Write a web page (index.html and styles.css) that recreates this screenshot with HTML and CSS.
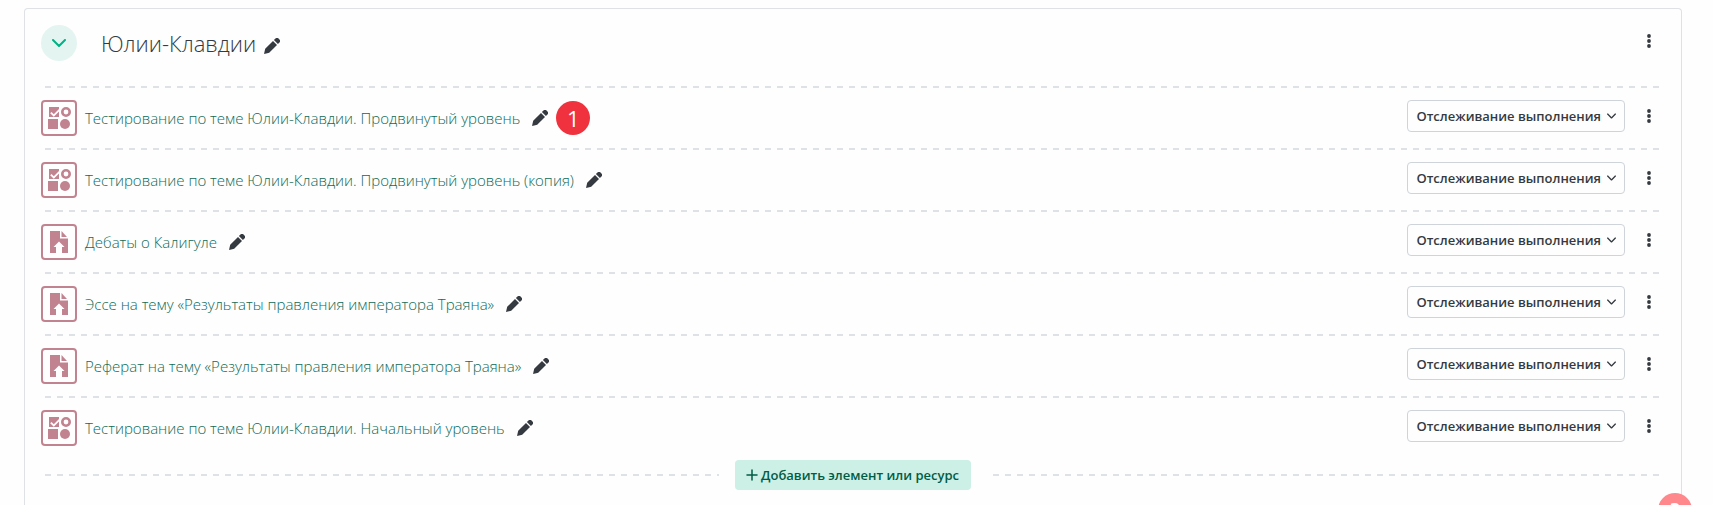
FILE: index.html
```
<!DOCTYPE html>
<html lang="ru">
<head>
    <meta charset="UTF-8">
    <meta name="viewport" content="width=device-width, initial-scale=1">
    <title>Юлии-Клавдии</title>
    <link rel="stylesheet" href="styles.css">
</head>
<body>
    <svg class="sprite" aria-hidden="true">
        <symbol id="pencil" viewBox="0 0 16 16">
            <path d="M0 16l1.2-5.2L9 3l4 4-7.8 7.8zM9.900 2.100l1.300-1.300a2.500 2.500 0 0 1 3.600 0l.4.400a2.500 2.500 0 0 1 0 3.600L13.900 6.100z"/>
        </symbol>
        <symbol id="dots" viewBox="0 0 4 14">
            <circle cx="2" cy="2" r="1.900"/><circle cx="2" cy="7" r="1.900"/><circle cx="2" cy="12" r="1.900"/>
        </symbol>
        <symbol id="chevron" viewBox="0 0 14 8">
            <path d="M1 1l6 6 6-6" fill="none" stroke="currentColor" stroke-linecap="round" stroke-linejoin="round"/>
        </symbol>
        <symbol id="quiz" viewBox="0 0 24 24">
            <path d="M2 1h10v2L6.800 8.200 4.500 6 3.200 7.300l3.600 3.500L12 5.600V11H2z"/>
            <circle cx="19" cy="6" r="3.700" fill="none" stroke="currentColor" stroke-width="2.600"/>
            <path d="M1 13h10v10H1z"/>
            <circle cx="18" cy="18" r="5"/>
        </symbol>
        <symbol id="assign" viewBox="0 0 24 24">
            <path d="M3 1h10v7.500h8V23h-6v-6h2.500L12 11.500 6.500 17H9v6H3z"/>
            <path d="M14.500 1v6H20z"/>
        </symbol>
    </svg>

    <main class="section">
        <header class="section-header">
            <button class="toggle" aria-label="Свернуть"><svg class="toggle-icon"><use href="#chevron"/></svg></button>
            <h3 class="section-title">Юлии-Клавдии</h3>
            <button class="edit edit-title" aria-label="Изменить"><svg><use href="#pencil"/></svg></button>
            <button class="menu" aria-label="Меню"><svg><use href="#dots"/></svg></button>
        </header>

        <ul class="activities">
            <li class="activity">
                <span class="activity-icon"><svg><use href="#quiz"/></svg></span>
                <a class="activity-name" href="#">Тестирование по теме Юлии-Клавдии. Продвинутый уровень</a>
                <button class="edit" aria-label="Изменить"><svg><use href="#pencil"/></svg></button>
                <span class="step">1</span>
                <div class="actions">
                    <button class="completion">Отслеживание выполнения <svg><use href="#chevron"/></svg></button>
                    <button class="menu" aria-label="Меню"><svg><use href="#dots"/></svg></button>
                </div>
            </li>
            <li class="activity">
                <span class="activity-icon"><svg><use href="#quiz"/></svg></span>
                <a class="activity-name" href="#">Тестирование по теме Юлии-Клавдии. Продвинутый уровень (копия)</a>
                <button class="edit" aria-label="Изменить"><svg><use href="#pencil"/></svg></button>
                <div class="actions">
                    <button class="completion">Отслеживание выполнения <svg><use href="#chevron"/></svg></button>
                    <button class="menu" aria-label="Меню"><svg><use href="#dots"/></svg></button>
                </div>
            </li>
            <li class="activity">
                <span class="activity-icon"><svg><use href="#assign"/></svg></span>
                <a class="activity-name" href="#">Дебаты о Калигуле</a>
                <button class="edit" aria-label="Изменить"><svg><use href="#pencil"/></svg></button>
                <div class="actions">
                    <button class="completion">Отслеживание выполнения <svg><use href="#chevron"/></svg></button>
                    <button class="menu" aria-label="Меню"><svg><use href="#dots"/></svg></button>
                </div>
            </li>
            <li class="activity">
                <span class="activity-icon"><svg><use href="#assign"/></svg></span>
                <a class="activity-name" href="#">Эссе на тему «Результаты правления императора Траяна»</a>
                <button class="edit" aria-label="Изменить"><svg><use href="#pencil"/></svg></button>
                <div class="actions">
                    <button class="completion">Отслеживание выполнения <svg><use href="#chevron"/></svg></button>
                    <button class="menu" aria-label="Меню"><svg><use href="#dots"/></svg></button>
                </div>
            </li>
            <li class="activity">
                <span class="activity-icon"><svg><use href="#assign"/></svg></span>
                <a class="activity-name" href="#">Реферат на тему «Результаты правления императора Траяна»</a>
                <button class="edit" aria-label="Изменить"><svg><use href="#pencil"/></svg></button>
                <div class="actions">
                    <button class="completion">Отслеживание выполнения <svg><use href="#chevron"/></svg></button>
                    <button class="menu" aria-label="Меню"><svg><use href="#dots"/></svg></button>
                </div>
            </li>
            <li class="activity">
                <span class="activity-icon"><svg><use href="#quiz"/></svg></span>
                <a class="activity-name" href="#">Тестирование по теме Юлии-Клавдии. Начальный уровень</a>
                <button class="edit" aria-label="Изменить"><svg><use href="#pencil"/></svg></button>
                <div class="actions">
                    <button class="completion">Отслеживание выполнения <svg><use href="#chevron"/></svg></button>
                    <button class="menu" aria-label="Меню"><svg><use href="#dots"/></svg></button>
                </div>
            </li>
        </ul>

        <div class="add-row">
            <div class="add-wrap">
                <button class="add-btn">
                    <svg viewBox="0 0 12 12"><path d="M6 1v10M1 6h10" fill="none" stroke="currentColor" stroke-width="1.500" stroke-linecap="round"/></svg>
                    Добавить элемент или ресурс
                </button>
            </div>
        </div>
    </main>

    <button class="help">?</button>
</body>
</html>
```
FILE: styles.css
```
* { box-sizing: border-box; }
body {
    margin: 0;
    padding: 8px 31px 0 24px;
    background: #fefefe;
    color: #343a40;
    font-family: 'Open Sans', sans-serif;
    font-size: 15px;
}
button {
    font-family: inherit;
    color: inherit;
    background: none;
    border: none;
    padding: 0;
    cursor: pointer;
}
svg {
    fill: currentColor;
    display: block;
}
.sprite {
    display: none;
}
.section {
    min-height: calc(100vh - 8px);
    border: 1px solid #dee2e6;
    border-bottom: none;
    border-radius: 4px 4px 0 0;
    padding: 16px 16px 0;
}
.section-header {
    display: flex;
    align-items: center;
    padding-bottom: 25px;
}
.toggle {
    width: 36px;
    height: 36px;
    border-radius: 50%;
    background: #e4f5f1;
    color: #00b386;
    display: flex;
    align-items: center;
    justify-content: center;
}
.toggle-icon {
    width: 14px;
    height: 8px;
    stroke-width: 2;
}
.section-title {
    margin: 0 0 0 24px;
    font-size: 22px;
    line-height: 36px;
    font-weight: 300;
}
.edit svg {
    width: 16px;
    height: 16px;
}
.edit {
    margin-left: 12px;
}
.edit-title {
    margin-left: 8px;
    padding-top: 6px;
}
.menu {
    width: 32px;
    height: 32px;
    display: flex;
    align-items: center;
    justify-content: center;
}
.menu svg {
    width: 4px;
    height: 14px;
}
.section-header .menu {
    margin-left: auto;
    align-self: flex-start;
}
.activities {
    list-style: none;
    margin: 0;
    padding: 0;
}
/* пунктир между элементами */
.activity::before,
.add-row::before {
    content: "";
    position: absolute;
    left: 4px;
    right: 4px;
    height: 2px;
    background: repeating-linear-gradient(90deg, #dee2e6 0 6px, transparent 6px 12px);
}
.activity::before {
    top: 0;
}
.activity {
    position: relative;
    display: flex;
    align-items: center;
    padding: 14px 0 12px;
}
.activity-icon {
    width: 36px;
    height: 36px;
    flex-shrink: 0;
    border: 2px solid #c28391;
    border-radius: 4px;
    color: #c28391;
    display: flex;
    align-items: center;
    justify-content: center;
}
.activity-icon svg {
    width: 24px;
    height: 24px;
}
.activity-name {
    margin-left: 8px;
    color: #0f6b55;
    font-weight: 300;
    line-height: 24px;
    text-decoration: none;
}
.activity-name:hover {
    text-decoration: underline;
}
.step {
    width: 34px;
    height: 34px;
    margin-left: 8px;
    border-radius: 50%;
    background: #ef323d;
    color: #fff;
    font-size: 22px;
    line-height: 34px;
    text-align: center;
}
.actions {
    display: flex;
    gap: 8px;
    margin-left: auto;
    align-self: flex-start;
}
.completion {
    height: 32px;
    padding: 0 8px;
    border: 1px solid #ced4da;
    border-radius: 4px;
    font-size: 13px;
    font-weight: 600;
    display: flex;
    align-items: center;
    gap: 6px;
    white-space: nowrap;
}
.completion svg {
    width: 9px;
    height: 6px;
    stroke-width: 2;
}
.add-row {
    position: relative;
    display: flex;
    align-items: center;
    justify-content: center;
    padding-top: 2px;
}
.add-row::before {
    top: 16px;
}
.add-wrap {
    position: relative;
    padding: 0 16px;
    background: #fefefe;
}
.add-btn {
    height: 30px;
    padding: 0 12px 0 11px;
    border-radius: 4px;
    background: #ccefe6;
    color: #005c45;
    font-size: 13px;
    font-weight: 600;
    display: flex;
    align-items: center;
    gap: 3px;
}
.add-btn svg {
    width: 12px;
    height: 12px;
}
.help {
    position: fixed;
    right: 21px;
    bottom: -22px;
    width: 34px;
    height: 34px;
    border-radius: 50%;
    background: #ff888c;
    color: #fff;
    font-size: 20px;
    font-weight: 600;
    line-height: 34px;
}
```
